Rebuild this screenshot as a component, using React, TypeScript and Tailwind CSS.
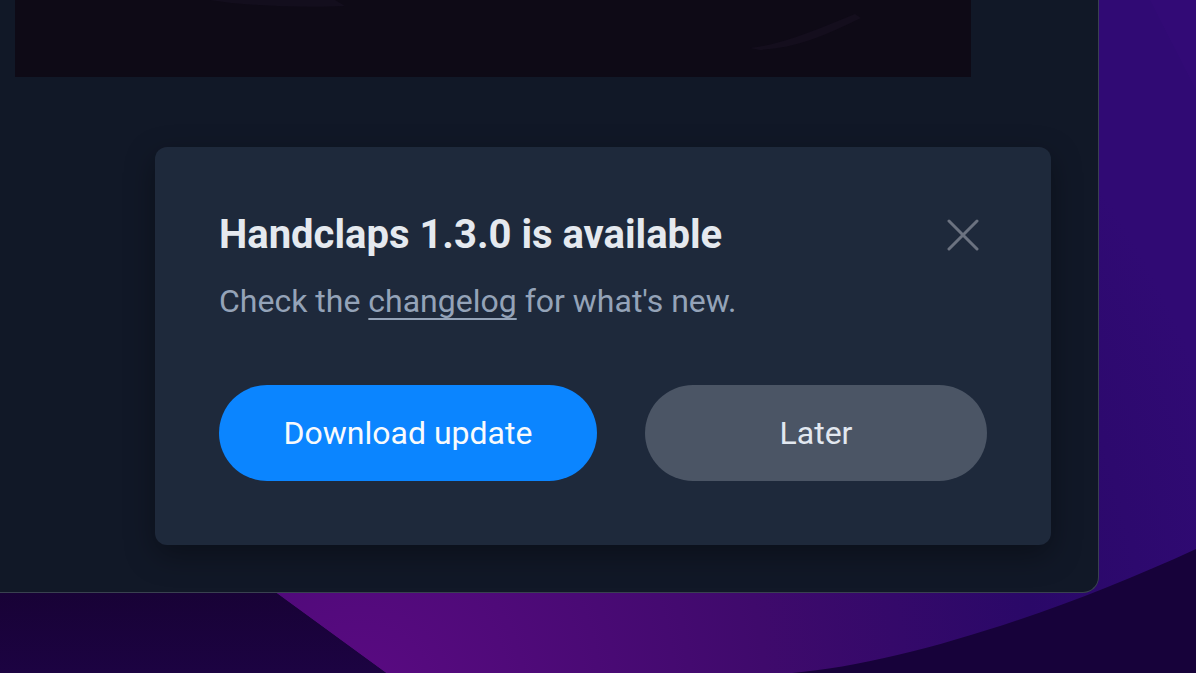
import React from "react";

const Wallpaper = () => {
  return (
    <svg
      className="absolute inset-0"
      width="1196"
      height="673"
      viewBox="0 0 1196 673"
      aria-hidden="true"
    >
      <defs>
        <radialGradient id="lit" cx="360" cy="700" r="900" gradientUnits="userSpaceOnUse">
          <stop offset="0" stopColor="#5a0a82" />
          <stop offset="0.45" stopColor="#3f0a6c" />
          <stop offset="0.75" stopColor="#2a0868" />
          <stop offset="1" stopColor="#300a74" />
        </radialGradient>
        <linearGradient id="darkLeft" x1="0" y1="592" x2="0" y2="673" gradientUnits="userSpaceOnUse">
          <stop offset="0" stopColor="#180236" />
          <stop offset="1" stopColor="#1c0342" />
        </linearGradient>
      </defs>
      <rect width="1196" height="673" fill="#17023a" />
      <path
        d="M0 0 L1196 0 L1196 549 C1060 612 900 664 792 673 L386 673 L275 592 L0 592 Z"
        fill="url(#lit)"
      />
      <path d="M0 592 L275 592 L386 673 L0 673 Z" fill="url(#darkLeft)" />
      {/* soft diagonal glint on the right */}
      <path d="M1196 90 L1196 0 L1150 0 Z" fill="#360c7a" opacity="0.35" />
    </svg>
  );
};

const CloseIcon = () => (
  <svg width="32" height="32" viewBox="0 0 32 32" fill="none">
    <path
      d="M2 2 L30 30 M30 2 L2 30"
      stroke="#6b7280"
      strokeWidth="3"
      strokeLinecap="round"
    />
  </svg>
);

const App = () => {
  return (
    <div className="relative w-[1196px] h-[673px] overflow-hidden bg-[#17023a] font-['Roboto',sans-serif]">
      <Wallpaper />

      {/* app window, cropped at the top left */}
      <div className="relative w-[1099px] h-[593px] bg-[#111827] border-r border-b border-[#394150] rounded-br-2xl pl-[15px]">
        <div className="relative w-[956px] h-[77px] bg-[#0e0a16] overflow-hidden">
          <svg className="absolute inset-0" width="956" height="77" viewBox="0 0 956 77">
            <path d="M195 0 C230 6 290 8 330 6 L320 0 Z" fill="#171223" opacity="0.5" />
            <path d="M735 48 C770 44 800 30 840 14 L846 18 C810 36 780 48 745 50 Z" fill="#1a1224" opacity="0.5" />
          </svg>
        </div>

        <div className="mt-[70px] ml-[140px] w-[896px] rounded-xl bg-[#1e293b] p-16 shadow-[0_10px_30px_rgba(0,0,0,0.35)]">
          <div className="flex items-center justify-between h-12">
            <h2 className="text-[40px] leading-[48px] font-bold text-[#e5e9ef]">
              Handclaps 1.3.0 is available
            </h2>
            <button className="w-12 h-12 flex items-center justify-center">
              <CloseIcon />
            </button>
          </div>
          <p className="mt-[18px] text-[32px] leading-[48px] text-[#94a3b8]">
            Check the{" "}
            <a
              href="#"
              className="underline decoration-2 underline-offset-[6px] [text-decoration-skip-ink:none]"
            >
              changelog
            </a>{" "}
            for what's new.
          </p>
          <div className="mt-[60px] flex gap-12">
            <button className="w-[378px] h-24 rounded-full bg-[#0b85ff] text-[32px] text-[#f8fafc]">
              Download update
            </button>
            <button className="w-[342px] h-24 rounded-full bg-[#4b5565] text-[32px] text-[#e2e8f0]">
              Later
            </button>
          </div>
        </div>
      </div>
    </div>
  );
};

export default App;
